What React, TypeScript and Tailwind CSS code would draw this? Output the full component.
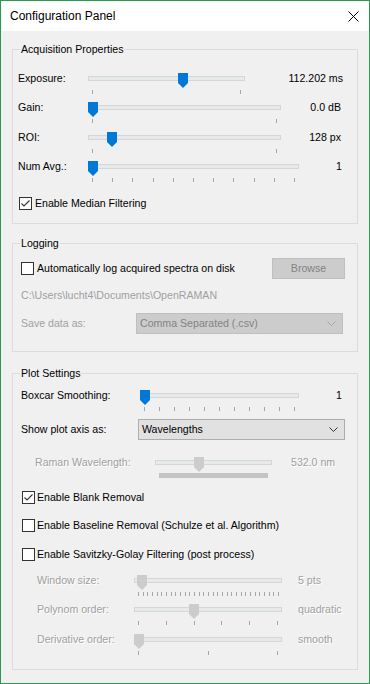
import React from "react";

type SliderProps = {
  w: string;
  thumb: number;
  ticks: number[];
  disabled?: boolean;
  band?: boolean;
};

const spread = (from: number, to: number, n: number) =>
  Array.from({ length: n }, (_, i) => Math.round(from + ((to - from) * i) / (n - 1)));

function Slider({ w, thumb, ticks, disabled, band }: SliderProps) {
  return (
    <div className={`relative h-[21px] shrink-0 ${w}`}>
      <div className="mt-[3px] h-[5px] border border-[#d6d6d6] bg-[#e7eaea]" />
      <svg className="absolute top-0" style={{ left: thumb }} width="10" height="15" viewBox="0 0 10 15">
        <polygon points="0,0 10,0 10,10 5,15 0,10" fill={disabled ? "#cccccc" : "#0078d7"} />
      </svg>
      {band && <div className="absolute left-[4px] right-[4px] top-[16px] h-[5px] bg-[#c4c4c4]" />}
      {ticks.map((t, i) => (
        <div key={i} className="absolute top-[17px] h-[4px] w-px bg-[#a6a6a6]" style={{ left: t }} />
      ))}
    </div>
  );
}

function CheckBox({ checked }: { checked?: boolean }) {
  return (
    <div className="h-[13px] w-[13px] shrink-0 border border-[#333] bg-white">
      {checked && (
        <svg width="11" height="11" viewBox="0 0 11 11">
          <polyline points="1.5,5.5 4,8 9.5,2.5" fill="none" stroke="#333" strokeWidth="1.1" />
        </svg>
      )}
    </div>
  );
}

function Chevron({ color }: { color: string }) {
  return (
    <svg width="9" height="5" viewBox="0 0 9 5">
      <polyline points="0.5,0.5 4.5,4.5 8.5,0.5" fill="none" stroke={color} strokeWidth="1" />
    </svg>
  );
}

function Legend({ children }: { children: React.ReactNode }) {
  return <span className="-mt-[7px] ml-[7px] w-fit bg-[#f0f0f0] px-[1px] leading-[13px]">{children}</span>;
}

const dim = "text-[#a0a0a0] [text-shadow:1px_1px_0_#ffffff]";

export default function App() {
  return (
    <div className="flex h-[684px] w-[370px] flex-col border border-[#2b9a50] bg-[#f0f0f0] font-['Liberation_Sans',Arial,sans-serif] text-[10.6px] text-black">
      {/* title bar */}
      <div className="flex h-[30px] shrink-0 items-center bg-white pl-[9px] pr-[10px]">
        <span className="text-[12px] leading-[14px]">Configuration Panel</span>
        <svg className="ml-auto" width="11" height="11" viewBox="0 0 11 11">
          <line x1="0.5" y1="0.5" x2="10.5" y2="10.5" stroke="#000" strokeWidth="1" />
          <line x1="10.5" y1="0.5" x2="0.5" y2="10.5" stroke="#000" strokeWidth="1" />
        </svg>
      </div>

      <div className="flex flex-col px-[11px] pt-[18px]">
        {/* Acquisition Properties */}
        <div className="flex h-[175px] flex-col border border-[#dcdcdc]">
          <Legend>Acquisition Properties</Legend>
          <div className="mt-[17px] flex h-[29px] items-start pl-[5px] pr-[14px]">
            <span className="w-[70px] leading-[11px]">Exposure:</span>
            <Slider w="w-[157px]" thumb={90} ticks={[4, 152]} />
            <span className="flex-1 text-right leading-[11px]">112.202 ms</span>
          </div>
          <div className="flex h-[30px] items-start pl-[5px] pr-[16px]">
            <span className="w-[70px] leading-[11px]">Gain:</span>
            <Slider w="w-[193px]" thumb={0} ticks={[4, 188]} />
            <span className="flex-1 text-right leading-[11px]">0.0 dB</span>
          </div>
          <div className="flex h-[29px] items-start pl-[5px] pr-[16px]">
            <span className="w-[70px] leading-[11px]">ROI:</span>
            <Slider w="w-[193px]" thumb={19} ticks={[4, 188]} />
            <span className="flex-1 text-right leading-[11px]">128 px</span>
          </div>
          <div className="flex h-[36px] items-start pl-[5px] pr-[15px]">
            <span className="w-[70px] leading-[11px]">Num Avg.:</span>
            <Slider w="w-[211px]" thumb={0} ticks={spread(4, 206, 11)} />
            <span className="flex-1 text-right leading-[11px]">1</span>
          </div>
          <div className="flex h-[13px] items-center gap-[3px] pl-[6px]">
            <CheckBox checked />
            <span>Enable Median Filtering</span>
          </div>
        </div>

        {/* Logging */}
        <div className="mt-[19px] flex h-[109px] flex-col border border-[#dcdcdc]">
          <Legend>Logging</Legend>
          <div className="mt-[8px] flex h-[21px] items-center pl-[8px] pr-[12px]">
            <CheckBox />
            <span className="ml-[3px]">Automatically log acquired spectra on disk</span>
            <div className="ml-auto flex h-[21px] w-[73px] items-center justify-center border border-[#bfbfbf] bg-[#cccccc] text-[#838383]">
              Browse
            </div>
          </div>
          <div className="mt-[10px] pl-[8px] leading-[13px] text-[#a0a0a0]">C:\Users\lucht4\Documents\OpenRAMAN</div>
          <div className="mt-[11px] flex h-[21px] items-center pl-[8px]">
            <span className="w-[115px] text-[#a0a0a0]">Save data as:</span>
            <div className="flex h-[21px] w-[207px] items-center border border-[#bfbfbf] bg-[#cccccc] pl-[3px] pr-[6px] text-[#838383]">
              <span>Comma Separated (.csv)</span>
              <span className="ml-auto flex">
                <Chevron color="#a8a8a8" />
              </span>
            </div>
          </div>
        </div>

        {/* Plot Settings */}
        <div className="mt-[21px] flex h-[297px] flex-col border border-[#dcdcdc]">
          <Legend>Plot Settings</Legend>
          <div className="mt-[10px] flex h-[29px] items-start pl-[8px] pr-[15px]">
            <span className="w-[119px] leading-[11px]">Boxcar Smoothing:</span>
            <Slider w="w-[159px]" thumb={0} ticks={spread(4, 154, 11)} />
            <span className="flex-1 text-right leading-[11px]">1</span>
          </div>
          <div className="flex h-[21px] items-center pl-[8px]">
            <span className="w-[117px]">Show plot axis as:</span>
            <div className="flex h-[21px] w-[207px] items-center border border-[#adadad] bg-[#e1e1e1] pl-[3px] pr-[6px]">
              <span>Wavelengths</span>
              <span className="ml-auto flex">
                <Chevron color="#333" />
              </span>
            </div>
          </div>
          <div className="mt-[17px] flex h-[34px] items-start pl-[22px]">
            <span className={`w-[120px] leading-[11px] ${dim}`}>Raman Wavelength:</span>
            <Slider w="w-[117px]" thumb={39} ticks={[]} band disabled />
            <span className={`pl-[19px] leading-[11px] ${dim}`}>532.0 nm</span>
          </div>
          <div className="flex h-[13px] items-center gap-[2px] pl-[9px]">
            <CheckBox checked />
            <span>Enable Blank Removal</span>
          </div>
          <div className="mt-[15px] flex h-[13px] items-center gap-[2px] pl-[9px]">
            <CheckBox />
            <span>Enable Baseline Removal (Schulze et al. Algorithm)</span>
          </div>
          <div className="mt-[16px] flex h-[13px] items-center gap-[2px] pl-[9px]">
            <CheckBox />
            <span>Enable Savitzky-Golay Filtering (post process)</span>
          </div>
          <div className="mt-[14px] flex h-[29px] items-start pl-[24px]">
            <span className={`w-[97px] leading-[11px] ${dim}`}>Window size:</span>
            <Slider w="w-[148px]" thumb={3} ticks={spread(4, 144, 31)} disabled />
            <span className={`pl-[16px] leading-[11px] ${dim}`}>5 pts</span>
          </div>
          <div className="flex h-[30px] items-start pl-[24px]">
            <span className={`w-[97px] leading-[11px] ${dim}`}>Polynom order:</span>
            <Slider w="w-[148px]" thumb={55} ticks={spread(4, 143, 6)} disabled />
            <span className={`pl-[16px] leading-[11px] ${dim}`}>quadratic</span>
          </div>
          <div className="flex h-[29px] items-start pl-[24px]">
            <span className={`w-[97px] leading-[11px] ${dim}`}>Derivative order:</span>
            <Slider w="w-[148px]" thumb={0} ticks={spread(4, 143, 3)} disabled />
            <span className={`pl-[16px] leading-[11px] ${dim}`}>smooth</span>
          </div>
        </div>
      </div>
    </div>
  );
}
